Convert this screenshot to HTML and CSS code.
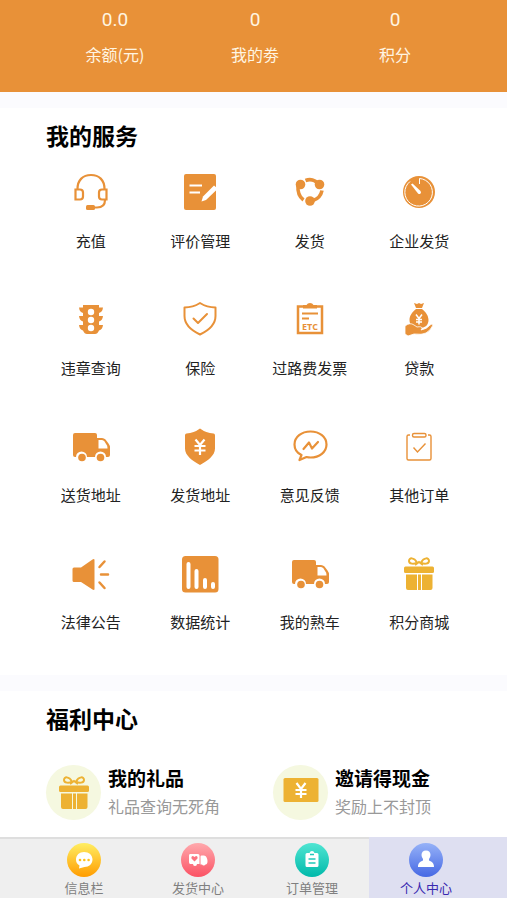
FILE: index.html
```html
<!DOCTYPE html>
<html lang="zh-CN">
<head>
    <meta charset="UTF-8">
    <meta name="viewport" content="width=device-width, initial-scale=1.0">
    <link rel="stylesheet" href="styles.css">
    <title>个人中心</title>
</head>
<body>
    <svg class="symbols" aria-hidden="true">
        <symbol id="truck" viewBox="0 0 40 40">
            <path fill="currentColor" d="M4 7h20q2 0 2 2v3h5q2 0 3.500 1.500l3 4q1.500 2 1.500 4V29q0 2-2 2h-2a5.500 5.500 0 0 0-11 0h-8a5.500 5.500 0 0 0-11 0H4q-2 0-2-2V9q0-2 2-2z"/>
            <path fill="#fff" d="M27.500 14h3.500q1.500 0 2.500 1.500l2.500 4q.5 1 .5 3h-9z"/>
            <circle fill="currentColor" cx="11" cy="31.500" r="3.800"/>
            <circle fill="currentColor" cx="29.500" cy="31.500" r="3.800"/>
        </symbol>
        <symbol id="gift" viewBox="0 0 40 40">
            <g fill="currentColor">
                <rect x="5" y="13.500" width="30" height="6.500" rx="1.500"/>
                <path d="M7 21.500h11V37H9q-2 0-2-2zM19 21.500h3V37h-3zM23 21.500h10.500V35q0 2-2 2H23z"/>
            </g>
            <path fill="none" stroke="currentColor" stroke-width="2" d="M18 9.500C15 4 10 4.500 10 8c0 3 5 3.500 8 1.500zM22 9.500C25 4 30 4.500 30 8c0 3-5 3.500-8 1.500zM16 12l4-3 4 3"/>
        </symbol>
    </svg>

    <header class="account">
        <div class="stat"><span class="stat-value">0.0</span><span class="stat-label">余额(元)</span></div>
        <div class="stat"><span class="stat-value">0</span><span class="stat-label">我的劵</span></div>
        <div class="stat"><span class="stat-value">0</span><span class="stat-label">积分</span></div>
    </header>

    <main>
        <section class="section">
            <h2>我的服务</h2>
            <div class="services">
                <a class="service" href="#">
                    <svg class="icon" viewBox="0 0 40 40" fill="none" stroke="currentColor" stroke-width="2.200">
                        <path d="M6.500 17C6.500 8 12 3 20 3s13.500 5 13.500 14M34 28c0 5-3 7.500-8 7.500h-3"/>
                        <path d="M4.500 17.500H9q3 0 3 3v4q0 3-3 3H4.500zM35.500 17.500H31q-3 0-3 3v4q0 3 3 3h4.500z"/>
                        <rect x="15" y="33" width="9" height="5" rx="1.500" fill="currentColor" stroke="none"/>
                    </svg>
                    充值
                </a>
                <a class="service" href="#">
                    <svg class="icon" viewBox="0 0 40 40">
                        <rect x="4" y="2" width="32" height="36" rx="2" fill="currentColor"/>
                        <path fill="none" stroke="#fff" stroke-width="2" d="M9.500 13.500H22M9.500 20.500h10.500"/>
                        <path fill="#fff" d="M21.500 29.500l1.500-5L34 13.500l3 2.500v1.500L26 28z"/>
                    </svg>
                    评价管理
                </a>
                <a class="service" href="#">
                    <svg class="icon" viewBox="0 0 40 40">
                        <g fill="currentColor">
                            <circle cx="10.500" cy="12.500" r="4.800"/>
                            <circle cx="29.500" cy="12.500" r="4.800"/>
                            <circle cx="20" cy="29" r="4.800"/>
                        </g>
                        <path fill="none" stroke="currentColor" stroke-width="3.600" d="M15.500 8.500q5-2 9.500.5l4 3M8 13c-.5 7 .5 11.500 5.500 15M32 18.500c-1 5-4 8.500-9 10"/>
                    </svg>
                    发货
                </a>
                <a class="service" href="#">
                    <svg class="icon" viewBox="0 0 40 40">
                        <circle cx="20" cy="20" r="16" fill="currentColor"/>
                        <path fill="none" stroke="#fff" stroke-width="1" d="M20.500 12V6.500A13.800 13.800 0 1 1 11 9.500"/>
                        <path fill="#fff" d="M12 12.500l1.500-1 8 7.500q1 1.500 0 2.500t-2.500 0z"/>
                    </svg>
                    企业发货
                </a>

                <a class="service" href="#">
                    <svg class="icon" viewBox="0 0 40 40">
                        <path fill="currentColor" d="M12 6h16v2.500h4q-.5 4.500-4 5.500v3h4q-.5 4.500-4 5.500V26h4q-.5 4.500-4 5.500Q26.500 35 24 35h-8q-2.500 0-4-3.500Q8.500 30.500 8 26h4v-3.500Q8.500 21.500 8 17h4v-3Q8.500 13 8 8.500h4z"/>
                        <g fill="#fff">
                            <circle cx="20" cy="13" r="3.200"/>
                            <circle cx="20" cy="21" r="3.200"/>
                            <circle cx="20" cy="29" r="3.200"/>
                        </g>
                    </svg>
                    违章查询
                </a>
                <a class="service" href="#">
                    <svg class="icon" viewBox="0 0 40 40" fill="none" stroke="currentColor" stroke-width="2" stroke-linejoin="round">
                        <path d="M20 4q7 4.500 15.500 4.500V17c0 8-6 14-15.500 18.500C10.500 31 4.500 25 4.500 17V8.500Q13 8.500 20 4z"/>
                        <path stroke-linecap="round" d="M13.500 19.500l4.500 4.500 9-9"/>
                    </svg>
                    保险
                </a>
                <a class="service" href="#">
                    <svg class="icon" viewBox="0 0 40 40">
                        <rect x="8" y="7.500" width="24" height="26.500" fill="none" stroke="currentColor" stroke-width="2.500"/>
                        <path fill="currentColor" d="M13 9.500V6h3.500q1-2 3.500-2t3.500 2H27v3.500z"/>
                        <path stroke="currentColor" stroke-width="2" d="M12 14.500h16M12 19.500h7"/>
                        <text class="icon-text" x="20" y="31">ETC</text>
                    </svg>
                    过路费发票
                </a>
                <a class="service" href="#">
                    <svg class="icon" viewBox="0 0 40 40">
                        <path fill="currentColor" d="M15 4l3 1 2-1 2 1 3-1-2 5h-6zM17 10h6c4 3 6.500 7 6.500 11 0 5-3 8-9.500 8s-9.500-3-9.500-8c0-4 2.500-8 6.500-11z"/>
                        <path fill="currentColor" stroke="#fff" stroke-width=".8" d="M6 27q5-4 9-1l3 2q5-1 5 1.500l-1 1.500q6-1 9-5 2-1.500 3 0-2 5-7 8-4 2-12 1l-6 2-3-2z"/>
                        <path fill="none" stroke="#fff" stroke-width="1.500" d="M17 15.500l3 4 3-4M20 19v6.500M17 20.500h6M17 23h6"/>
                    </svg>
                    贷款
                </a>

                <a class="service" href="#">
                    <svg class="icon"><use href="#truck"/></svg>
                    送货地址
                </a>
                <a class="service" href="#">
                    <svg class="icon" viewBox="0 0 40 40">
                        <path fill="currentColor" d="M20 2.500q6 4.500 13.500 5 1.500 0 1.500 2v13c0 7-7 12-15 16.500C12 34.500 5 29.500 5 22.500v-13q0-2 1.500-2Q14 7 20 2.500z"/>
                        <path fill="none" stroke="#fff" stroke-width="2.200" d="M15.500 13.500L20 19l4.500-5.500M20 19v10M14.500 20h11M14.500 24.500h11"/>
                    </svg>
                    发货地址
                </a>
                <a class="service" href="#">
                    <svg class="icon" viewBox="0 0 40 40" fill="none" stroke="currentColor" stroke-width="2.200" stroke-linejoin="round">
                        <path d="M20.500 5.500c9 0 16 5.500 16 13s-7 13-16 13q-2 0-4-.5L9.500 34l2-5c-4.500-2-7-6-7-10.500 0-7.500 7-13 16-13z"/>
                        <path stroke-linecap="round" d="M13.500 23l5.500-6.500 3 6 6-6.500"/>
                    </svg>
                    意见反馈
                </a>
                <a class="service" href="#">
                    <svg class="icon" viewBox="0 0 40 40" fill="none" stroke="currentColor" stroke-width="1.400">
                        <path d="M11 9H9.500Q8 9 8 10.500v22Q8 34 9.500 34h21q1.500 0 1.500-1.500v-22Q32 9 30.500 9H29"/>
                        <rect x="13.500" y="7.500" width="13.500" height="3.500" rx="1.500"/>
                        <path d="M14.500 21.500l4 4.500 8-8.500"/>
                    </svg>
                    其他订单
                </a>

                <a class="service" href="#">
                    <svg class="icon" viewBox="0 0 40 40">
                        <path fill="currentColor" d="M3 14.500h7L21.500 6.500Q23.500 5.500 23.500 7v29q0 1.500-2 .5L10 29H3q-1.500 0-1.500-1.500V16q0-1.500 1.500-1.500z"/>
                        <path stroke="currentColor" stroke-width="2.500" stroke-linecap="round" d="M28.500 14l5-5.500M30 21.500h7M28.500 29.500l5 5.500"/>
                    </svg>
                    法律公告
                </a>
                <a class="service" href="#">
                    <svg class="icon" viewBox="0 0 40 40">
                        <rect x="2" y="3" width="36.500" height="36.500" rx="3.500" fill="currentColor"/>
                        <path stroke="#fff" stroke-width="4" stroke-linecap="round" d="M8.500 11v23M16.500 18v16M25 27v7M33 31v3"/>
                    </svg>
                    数据统计
                </a>
                <a class="service" href="#">
                    <svg class="icon"><use href="#truck"/></svg>
                    我的熟车
                </a>
                <a class="service" href="#">
                    <svg class="icon icon-gold"><use href="#gift"/></svg>
                    积分商城
                </a>
            </div>
        </section>

        <section class="section">
            <h2>福利中心</h2>
            <div class="benefits">
                <a class="benefit" href="#">
                    <span class="benefit-icon"><svg class="icon icon-gold"><use href="#gift"/></svg></span>
                    <span class="benefit-text"><strong>我的礼品</strong><span>礼品查询无死角</span></span>
                </a>
                <a class="benefit" href="#">
                    <span class="benefit-icon">
                        <svg class="icon icon-gold" viewBox="0 0 40 40">
                            <rect x="2.500" y="6" width="35" height="24" rx="1.500" fill="currentColor"/>
                            <path fill="none" stroke="#fff" stroke-width="2.200" d="M15.500 11l4.500 6 4.500-6M20 16v10M14.500 18h11M14.500 22h11"/>
                        </svg>
                    </span>
                    <span class="benefit-text"><strong>邀请得现金</strong><span>奖励上不封顶</span></span>
                </a>
            </div>
        </section>
    </main>

    <nav class="tabs">
        <a class="tab" href="#">
            <svg class="tab-icon" viewBox="0 0 34 34">
                <defs><linearGradient id="yellow" x2="0" y2="1"><stop stop-color="#ffee62"/><stop offset="1" stop-color="#ff9c00"/></linearGradient></defs>
                <circle cx="17" cy="17" r="17" fill="url(#yellow)"/>
                <path fill="#fff" d="M17 9c5 0 8.500 3 8.500 7.500S22 24 17.500 24L12 25.500l.5-3C10 21 9 19 9 16.500 9 12 12.500 9 17 9z"/>
                <g fill="#ffc21c"><circle cx="13" cy="17" r="1.300"/><circle cx="17.300" cy="17" r="1.300"/><circle cx="21.600" cy="17" r="1.300"/></g>
            </svg>
            信息栏
        </a>
        <a class="tab" href="#">
            <svg class="tab-icon" viewBox="0 0 34 34">
                <defs><linearGradient id="pink" x2="0" y2="1"><stop stop-color="#ffa9ad"/><stop offset="1" stop-color="#fb5264"/></linearGradient></defs>
                <circle cx="17" cy="17" r="17" fill="url(#pink)"/>
                <path fill="#fff" d="M9 11h8q1.500 0 1.500 1.500V21H16a2 2 0 0 1-4 0H9q-1-.5-1-2v-6.500Q8 11 9 11zM19.500 13.500q0-1 1-1h2.500c2 0 3.500 3 3.500 5.500 0 2-.5 3.500-2 3.500a2 2 0 0 1-3.500 0h-1.500z"/>
                <path fill="#fb7380" d="M13.500 18.500l-3-3q-.5-2.500 1.500-2.500l1.500 1 1.500-1q2 0 1.500 2.500z"/>
            </svg>
            发货中心
        </a>
        <a class="tab" href="#">
            <svg class="tab-icon" viewBox="0 0 34 34">
                <defs><linearGradient id="teal" x2="0" y2="1"><stop stop-color="#50e5d2"/><stop offset="1" stop-color="#00b9aa"/></linearGradient></defs>
                <circle cx="17" cy="17" r="17" fill="url(#teal)"/>
                <path fill="#fff" d="M12 10h2.500q.5-2 2.500-2t2.500 2H22q1.500 0 1.500 1.500v11Q23.500 24 22 24H12q-1.500 0-1.500-1.500v-11Q10.500 10 12 10z"/>
                <path stroke="#20c9b9" stroke-width="1.500" d="M15 11.500h4M13.500 16h7M13.500 20h7"/>
            </svg>
            订单管理
        </a>
        <a class="tab tab-active" href="#" aria-current="page">
            <svg class="tab-icon" viewBox="0 0 34 34">
                <defs><linearGradient id="blue" x2="0" y2="1"><stop stop-color="#96b2f8"/><stop offset="1" stop-color="#4668e4"/></linearGradient></defs>
                <circle cx="17" cy="17" r="17" fill="url(#blue)"/>
                <path fill="#fff" d="M17 7.500c3 0 4.500 2 4.500 4.500q0 2-1.500 4v1.500c3 1 5 2.500 5 6.500H9c0-4 2-5.500 5-6.500V16q-1.500-2-1.500-4c0-2.500 1.500-4.500 4.500-4.500z"/>
            </svg>
            个人中心
        </a>
    </nav>
</body>
</html>
```

FILE: styles.css
```css
* {
    box-sizing: border-box;
}

body {
    margin: 0;
    min-height: 100vh;
    display: flex;
    flex-direction: column;
    background: #fff;
    color: #222;
    font-family: "Noto Sans CJK SC", "Noto Sans", sans-serif;
}

a {
    color: inherit;
    text-decoration: none;
}

.symbols {
    display: none;
}

.account {
    display: grid;
    grid-template-columns: repeat(3, 1fr);
    padding: 8px 42px 26px 45px;
    background: #e89138;
    color: #fff5e2;
}

.stat {
    display: flex;
    flex-direction: column;
    align-items: center;
    gap: 10px;
    line-height: 24px;
}

.stat-value {
    font-family: Roboto, sans-serif;
    font-size: 19px;
}

.stat-label {
    font-size: 16px;
}

main {
    flex: 1;
}

.section {
    border-top: 16px solid #fbfbfe;
    padding-top: 11px;
}

h2 {
    margin: 0 46px 21px;
    font-size: 23px;
    line-height: 32px;
    color: #000;
}

.services {
    display: grid;
    grid-template-columns: repeat(4, 1fr);
    row-gap: 48px;
    padding: 0 33px 43px 36px;
}

.service {
    display: flex;
    flex-direction: column;
    align-items: center;
    gap: 19px;
    font-size: 15px;
    line-height: 20px;
    white-space: nowrap;
}

.icon {
    width: 40px;
    height: 40px;
    color: #e89138;
}

.icon-gold {
    color: #edb233;
}

.icon-text {
    fill: currentColor;
    font-family: "Open Sans", sans-serif;
    font-size: 9px;
    font-weight: bold;
    text-anchor: middle;
}

.benefits {
    display: grid;
    grid-template-columns: repeat(2, 1fr);
    padding: 9px 7px 17px 46px;
}

.benefit {
    display: flex;
    align-items: center;
    gap: 7px;
}

.benefit-icon {
    display: flex;
    align-items: center;
    justify-content: center;
    width: 55px;
    height: 55px;
    border-radius: 50%;
    background: #f5f8e0;
}

.benefit-text {
    display: flex;
    flex-direction: column;
    font-size: 16px;
    line-height: 28px;
    color: #999;
}

.benefit-text strong {
    font-size: 19px;
    color: #000;
}

.tabs {
    display: grid;
    grid-template-columns: 114fr 114fr 114fr 138fr;
    margin-bottom: 2px;
    padding-left: 27px;
    background: #efefef;
    box-shadow: inset 0 2px #dedede;
}

.tab {
    display: flex;
    flex-direction: column;
    align-items: center;
    gap: 2px;
    padding: 6px 0 1px;
    font-size: 13px;
    line-height: 18px;
    color: #808080;
}

.tab-icon {
    width: 34px;
    height: 34px;
}

.tab-active {
    padding-right: 24px;
    background: #dedff1;
    color: #3828b0;
}
```
